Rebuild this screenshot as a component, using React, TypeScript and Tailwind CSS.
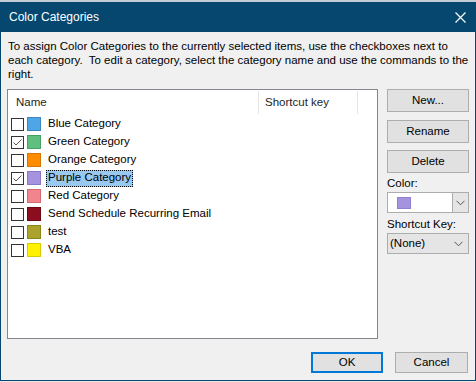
import React from "react";

// category rows shown in the list
const categories = [
  { name: "Blue Category", color: "#4fa6e6", border: "#3a86c0", checked: false },
  { name: "Green Category", color: "#5fbf7e", border: "#47a064", checked: true },
  { name: "Orange Category", color: "#ff8c00", border: "#d97500", checked: false },
  { name: "Purple Category", color: "#a593e0", border: "#8a78c4", checked: true, selected: true },
  { name: "Red Category", color: "#f1848d", border: "#d46a73", checked: false },
  { name: "Send Schedule Recurring Email", color: "#8b0e1e", border: "#6a0714", checked: false },
  { name: "test", color: "#aba32b", border: "#8c851c", checked: false },
  { name: "VBA", color: "#fff100", border: "#d8cb00", checked: false },
];

const Chevron = () => (
  <svg width="9" height="6" viewBox="0 0 9 6" fill="none">
    <path d="M0.5 0.8 L4.5 4.8 L8.5 0.8" stroke="#555" strokeWidth="1" />
  </svg>
);

const CheckBox = ({ checked }: { checked: boolean }) => (
  <div className="w-[13px] h-[13px] border border-[#333] bg-white flex items-center justify-center">
    {checked && (
      <svg width="11" height="11" viewBox="0 0 11 11" fill="none">
        <path d="M1.5 5.5 L4 8 L9.5 2.5" stroke="#555" strokeWidth="1" />
      </svg>
    )}
  </div>
);

const Button = ({ label, className = "" }: { label: string; className?: string }) => (
  <div
    className={
      "h-[23px] w-[82px] bg-[#e1e1e1] border border-[#adadad] flex items-center justify-center text-[11.5px] text-black " +
      className
    }
  >
    {label}
  </div>
);

export default function App() {
  return (
    <div className="w-[476px] h-[382px] bg-[#f0f0f0] font-['Liberation_Sans',Arial,sans-serif] overflow-hidden">
      {/* strip of the window behind */}
      <div className="h-[2px] bg-[#c5ccd3]"></div>

      {/* title bar */}
      <div className="h-[30px] bg-[#05476f] flex items-center justify-between pl-[9px] pr-[10px]">
        <span className="text-white text-[12px]">Color Categories</span>
        <svg width="11" height="11" viewBox="0 0 11 11" fill="none">
          <path d="M0.5 0.5 L10.5 10.5 M10.5 0.5 L0.5 10.5" stroke="#fff" strokeWidth="1.2" />
        </svg>
      </div>

      {/* body */}
      <div className="h-[349px] border-x border-b border-[#05476f] pl-[6px] pr-[6px] pt-[7px] flex flex-col text-black">
        <p className="text-[11.5px] leading-[14px] pl-[1px]">
          <span className="block">To assign Color Categories to the currently selected items, use the checkboxes next to</span>
          <span className="block">each category.&nbsp; To edit a category, select the category name and use the commands to the</span>
          <span className="block">right.</span>
        </p>

        <div className="flex mt-[8px] gap-[9px]">
          {/* list */}
          <div className="w-[371px] h-[250px] border border-[#828790] bg-white">
            <div className="flex h-[25px] items-center text-[11.5px] text-[#1e1e1e]">
              <div className="w-[250px] h-full pl-[8px] pt-[1px] flex items-center">Name</div>
              <div className="w-[100px] h-[23px] border-x border-[#e5e5e5] pl-[6px] pt-[1px] flex items-center">
                Shortcut key
              </div>
            </div>
            <div className="flex flex-col">
              {categories.map((c) => (
                <div key={c.name} className="h-[18px] flex items-center pl-[3px] text-[11.5px]">
                  <CheckBox checked={c.checked} />
                  <div
                    className="w-[14px] h-[14px] ml-[3px] border"
                    style={{ backgroundColor: c.color, borderColor: c.border }}
                  ></div>
                  <span
                    className={
                      "ml-[5px] px-[1px] h-[17px] flex items-center border " +
                      (c.selected ? "bg-[#99c9ef] border-dotted border-black" : "border-transparent")
                    }
                  >
                    {c.name}
                  </span>
                </div>
              ))}
            </div>
          </div>

          {/* right side commands */}
          <div className="flex flex-col w-[82px]">
            <Button label="New..." />
            <Button label="Rename" className="mt-[8px]" />
            <Button label="Delete" className="mt-[7px]" />
            <div className="text-[11.5px] mt-[3px] h-[15px] leading-[15px]">Color:</div>
            <div className="mt-[1px] h-[21px] border border-[#adadad] bg-white flex">
              <div className="flex-1 flex items-center pl-[9px]">
                <div className="w-[14px] h-[12px] bg-[#a593e0] border border-[#8f7fd0]"></div>
              </div>
              <div className="w-[16px] bg-[#e5e5e5] border-l border-[#adadad] flex items-center justify-center">
                <Chevron />
              </div>
            </div>
            <div className="text-[11.5px] mt-[4px] h-[15px] leading-[15px]">Shortcut Key:</div>
            <div className="mt-[1px] h-[21px] border border-[#adadad] bg-[#e5e5e5] flex items-center justify-between pl-[2px] pr-[5px] text-[11.5px]">
              <span>(None)</span>
              <Chevron />
            </div>
          </div>
        </div>

        {/* footer buttons */}
        <div className="flex justify-end gap-[12px] mt-[13px] pr-[1px]">
          <div className="w-[72px] h-[21px] bg-[#e1e1e1] border-2 border-[#0078d7] flex items-center justify-center text-[11.5px]">
            OK
          </div>
          <div className="w-[73px] h-[21px] bg-[#e1e1e1] border border-[#adadad] flex items-center justify-center text-[11.5px]">
            Cancel
          </div>
        </div>
      </div>
      <div className="h-[1px] bg-[#e8e8e8]"></div>
    </div>
  );
}
